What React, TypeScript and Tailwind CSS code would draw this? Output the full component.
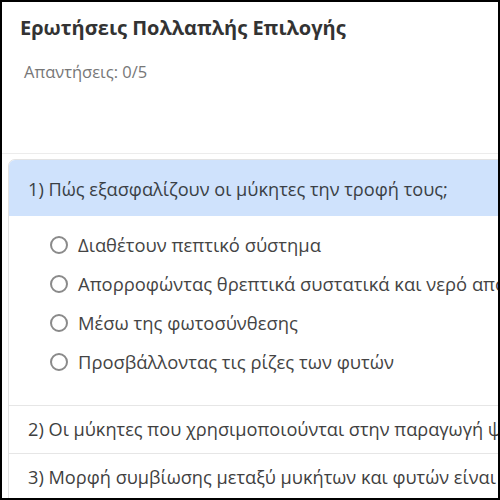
import React from "react";

const options = [
  "Διαθέτουν πεπτικό σύστημα",
  "Απορροφώντας θρεπτικά συστατικά και νερό από το περιβάλλον",
  "Μέσω της φωτοσύνθεσης",
  "Προσβάλλοντας τις ρίζες των φυτών",
];

export default function App() {
  return (
    <div
      className="w-[500px] h-[500px] border-2 border-black bg-white overflow-hidden"
      style={{ fontFamily: '"Open Sans", "Noto Sans", sans-serif' }}
    >
      <div className="w-[900px]">
        <div className="h-[152px] border-b border-[#ececec] pl-[18px] pt-[12px]">
          <h1 className="text-[20px] leading-[28px] font-bold text-[#333]">
            Ερωτήσεις Πολλαπλής Επιλογής
          </h1>
          <p className="mt-[19px] pl-[4px] text-[16.5px] leading-[22px] text-[#777]">
            Απαντήσεις: 0/5
          </p>
        </div>
        <div className="ml-[6px] mt-[5px] border border-[#e3e3e3] rounded-tl-[7px]">
          <div className="h-[56px] bg-[#cfe2fc] rounded-tl-[6px] flex items-center pt-[3px] pl-[19px] text-[18.2px] text-[#3a3f45]">
            1) Πώς εξασφαλίζουν οι μύκητες την τροφή τους;
          </div>
          <div className="pl-[41px] pt-[18px] pb-[32px] flex flex-col gap-[17px]">
            {options.map((o) => (
              <label key={o} className="flex items-center gap-[10px] h-[22px] text-[18.4px] text-[#444]">
                <span className="w-[18px] h-[18px] rounded-full border-2 border-[#8a8a8a] shrink-0" />
                <span className="whitespace-nowrap">{o}</span>
              </label>
            ))}
          </div>
          <div className="h-[48px] border-t border-[#e6e6e6] flex items-center pl-[19px] text-[18.2px] text-[#3f3f3f] whitespace-nowrap">
            2) Οι μύκητες που χρησιμοποιούνται στην παραγωγή ψωμιού είναι
          </div>
          <div className="h-[48px] border-t border-[#e6e6e6] flex items-center pl-[19px] text-[18.2px] text-[#3f3f3f] whitespace-nowrap">
            3) Μορφή συμβίωσης μεταξύ μυκήτων και φυτών είναι
          </div>
        </div>
      </div>
    </div>
  );
}
